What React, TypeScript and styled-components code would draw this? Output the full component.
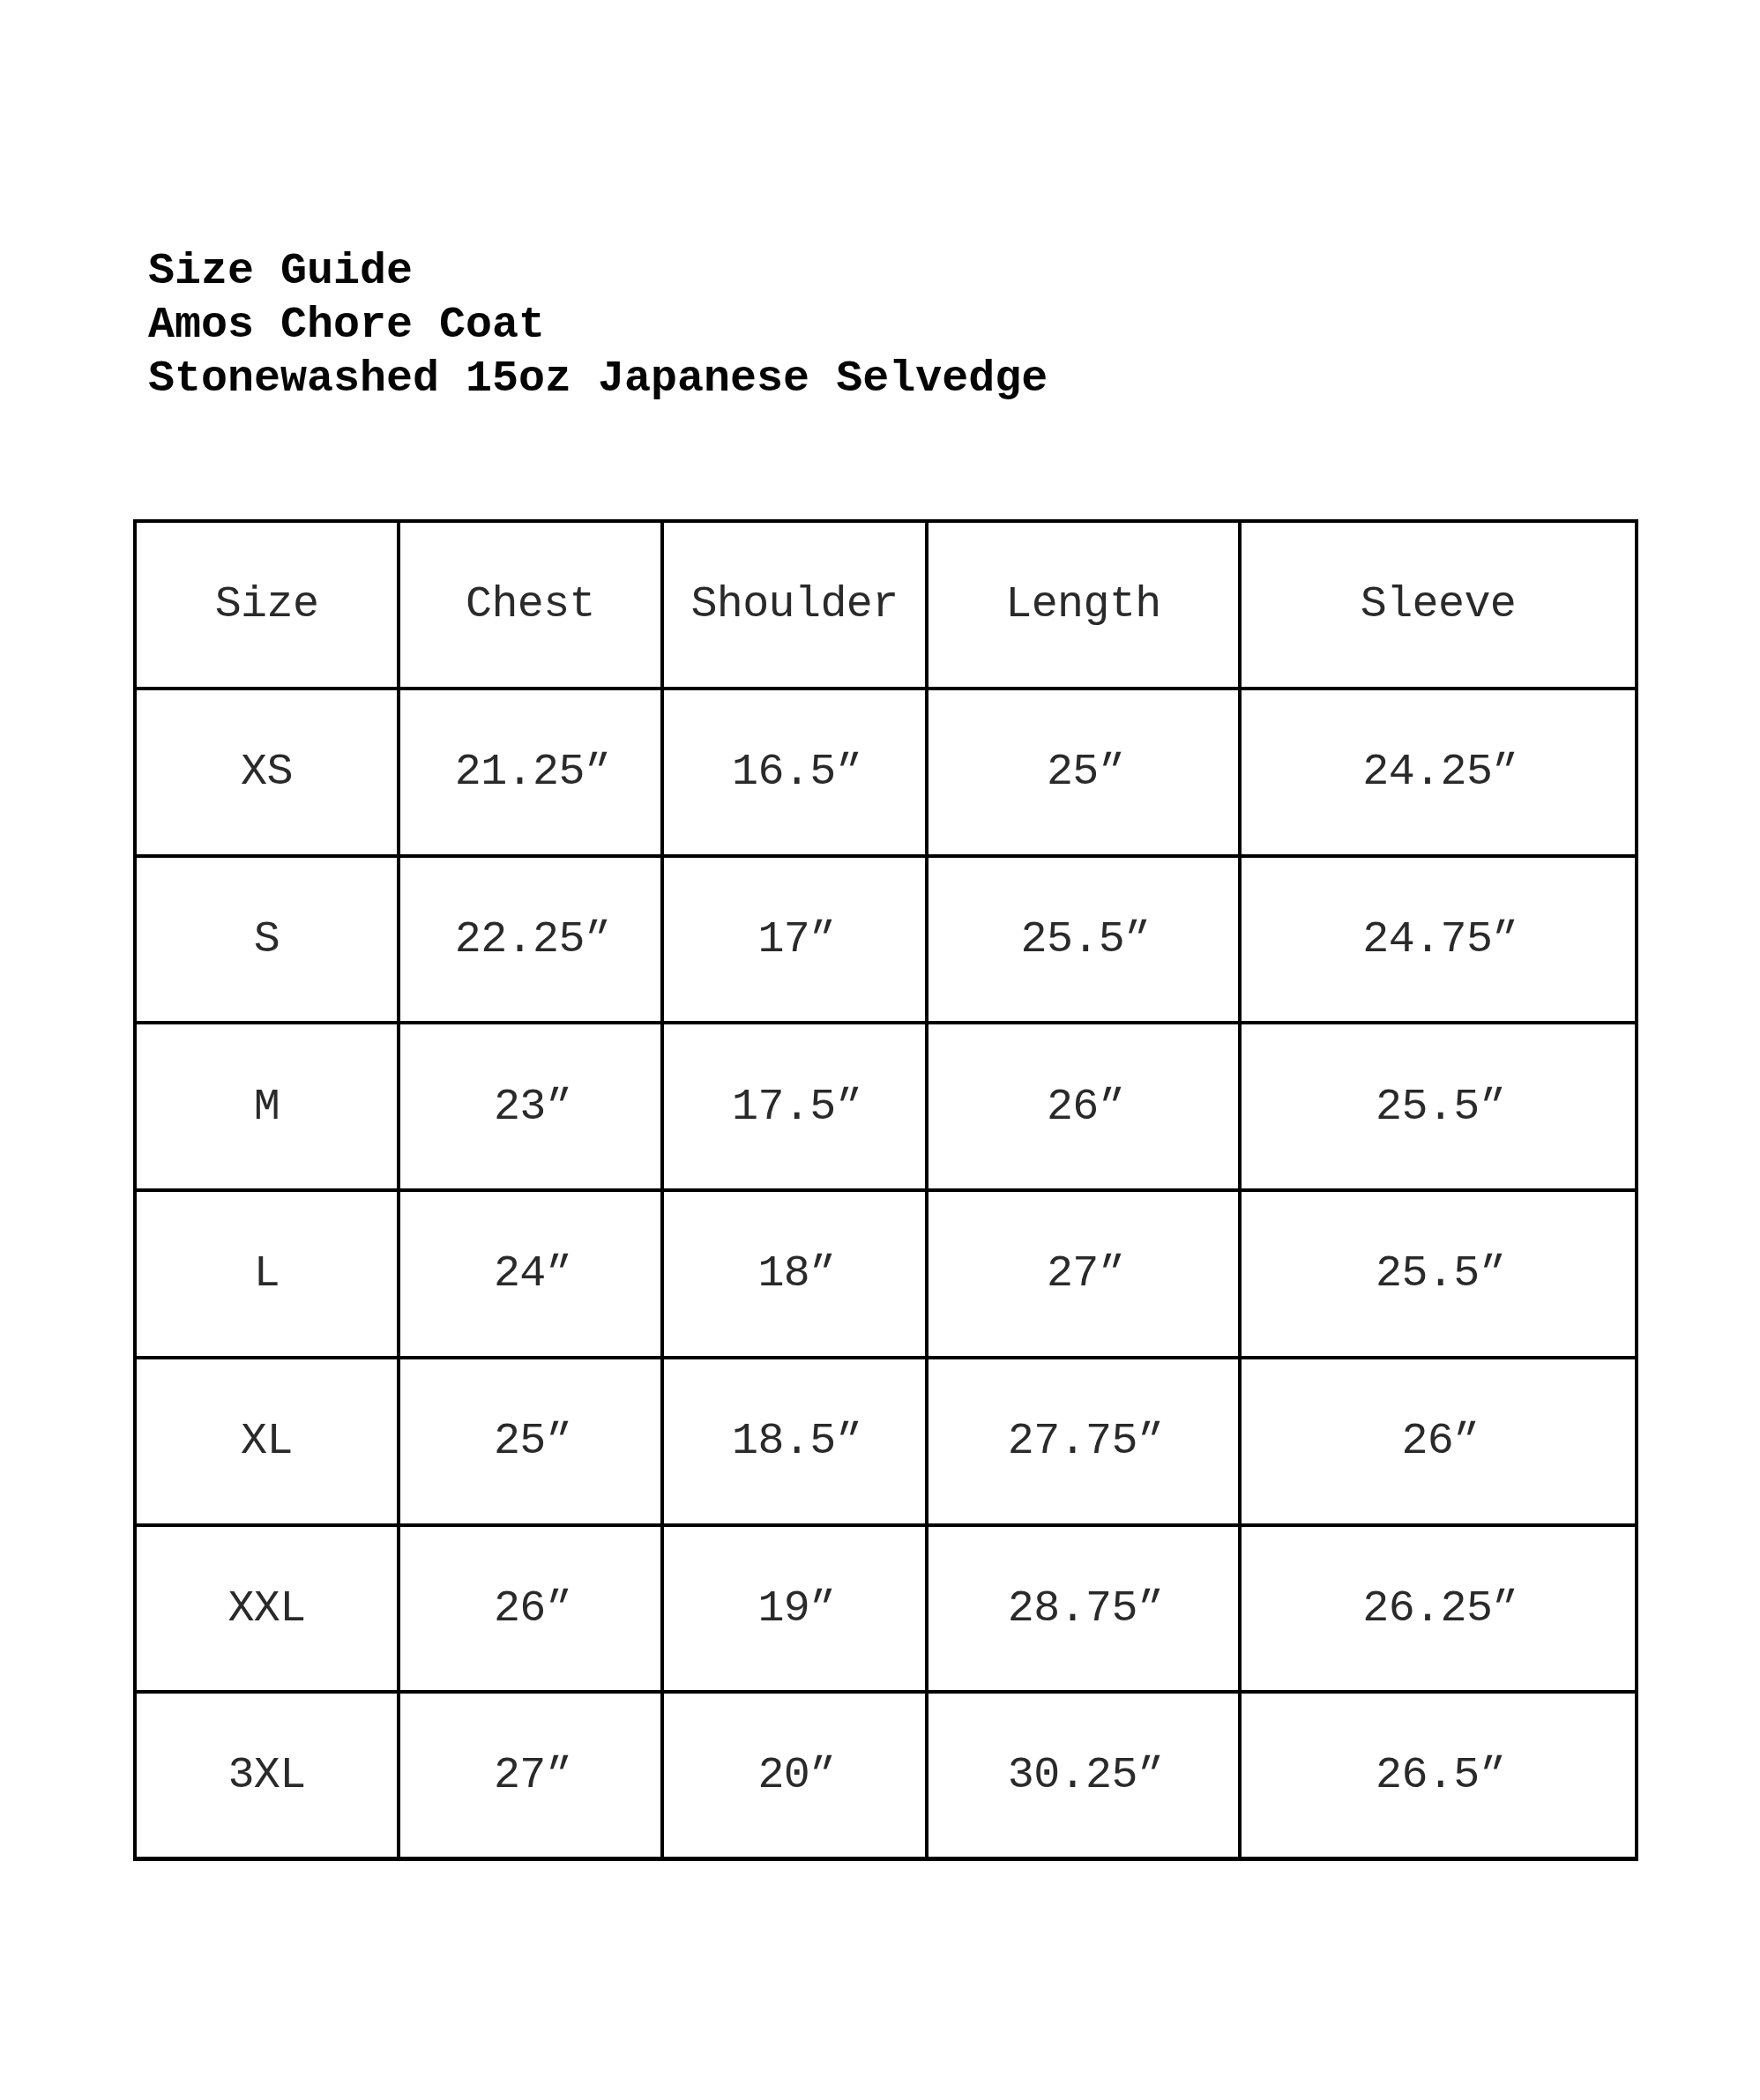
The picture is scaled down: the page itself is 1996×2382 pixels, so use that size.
import React from 'react'
import styled, { createGlobalStyle } from 'styled-components'

const GlobalStyle = createGlobalStyle`
  html, body {
    margin: 0;
    padding: 0;
    background: #ffffff;
  }
`

const Page = styled.div`
  width: 1996px;
  height: 2382px;
  box-sizing: border-box;
  padding: 277px 0 0 151px;
  background: #ffffff;
  font-family: 'Liberation Mono', 'Courier New', monospace;
  color: #000;
`

const Heading = styled.div`
  padding-left: 17px;
  font-weight: 700;
  font-size: 50px;
  line-height: 61px;
  color: #050505;
`

const Grid = styled.div`
  margin-top: 129px;
  display: grid;
  grid-template-columns: 299px 299px 300px 355px 450px;
  grid-auto-rows: 189.75px;
  width: max-content;
  border-left: 4px solid #000;
  border-top: 4px solid #000;
`

const Cell = styled.div<{ $last?: boolean }>`
  display: flex;
  align-items: center;
  justify-content: center;
  box-sizing: border-box;
  border-right: 4px solid #000;
  border-bottom: ${(p) => (p.$last ? '5px' : '4px')} solid #000;
  font-size: 50px;
  letter-spacing: -0.6px;
  color: #2a2a2a;
  white-space: nowrap;
`

// inch mark, slanted like a double prime
const Inch = styled.span`
  display: inline-block;
  margin-left: -5px;
  transform: skewX(-18deg);
`

const headers = ['Size', 'Chest', 'Shoulder', 'Length', 'Sleeve']

const rows = [
  ['XS', '21.25', '16.5', '25', '24.25'],
  ['S', '22.25', '17', '25.5', '24.75'],
  ['M', '23', '17.5', '26', '25.5'],
  ['L', '24', '18', '27', '25.5'],
  ['XL', '25', '18.5', '27.75', '26'],
  ['XXL', '26', '19', '28.75', '26.25'],
  ['3XL', '27', '20', '30.25', '26.5'],
]

export default function App() {
  return (
    <Page>
      <GlobalStyle />
      <Heading>
        <div>Size Guide</div>
        <div>Amos Chore Coat</div>
        <div>Stonewashed 15oz Japanese Selvedge</div>
      </Heading>
      <Grid>
        {headers.map((h) => (
          <Cell key={h}>{h}</Cell>
        ))}
        {rows.map((row, i) =>
          row.map((value, j) => (
            <Cell key={`${i}-${j}`} $last={i === rows.length - 1}>
              {value}
              {j > 0 && <Inch>″</Inch>}
            </Cell>
          ))
        )}
      </Grid>
    </Page>
  )
}
